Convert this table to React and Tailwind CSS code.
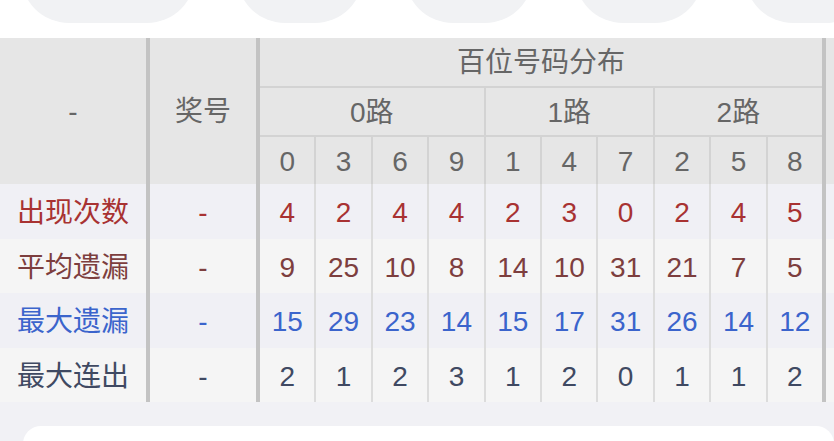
import React from "react";

const FONT = { fontFamily: '"Liberation Sans", "Noto Sans CJK SC", sans-serif' };

const rows = [
  { label: "出现次数", color: "text-[#a83232]", bg: "bg-[#f0f0f5]", vals: [4, 2, 4, 4, 2, 3, 0, 2, 4, 5] },
  { label: "平均遗漏", color: "text-[#7d3e3e]", bg: "bg-[#f5f5f5]", vals: [9, 25, 10, 8, 14, 10, 31, 21, 7, 5] },
  { label: "最大遗漏", color: "text-[#3b64cc]", bg: "bg-[#f0f0f5]", vals: [15, 29, 23, 14, 15, 17, 31, 26, 14, 12] },
  { label: "最大连出", color: "text-[#3f4962]", bg: "bg-[#f5f5f5]", vals: [2, 1, 2, 3, 1, 2, 0, 1, 1, 2] },
];

const digits = [0, 3, 6, 9, 1, 4, 7, 2, 5, 8];

export default function App() {
  return (
    <div className="w-[834px] h-[441px] overflow-hidden bg-[#f1f1f5] text-[28px] leading-none" style={FONT}>
      {/* top tabs */}
      <div className="h-[38px] bg-white overflow-hidden flex pl-[21px] gap-[42px]">
        <div className="w-[174px] h-[96px] -mt-[73px] rounded-[48px] bg-[#f1f2f4] shrink-0" />
        <div className="w-[126px] h-[96px] -mt-[73px] rounded-[48px] bg-[#f1f2f4] shrink-0" />
        <div className="w-[128px] h-[96px] -mt-[73px] rounded-[48px] bg-[#f1f2f4] shrink-0" />
        <div className="w-[128px] h-[96px] -mt-[73px] rounded-[48px] bg-[#f1f2f4] shrink-0" />
        <div className="w-[128px] h-[96px] -mt-[73px] rounded-[48px] bg-[#f1f2f4] shrink-0" />
      </div>

      {/* header */}
      <div className="flex h-[146px] bg-[#e6e6e6] text-[#666666]">
        <div className="w-[146px] shrink-0 flex items-center justify-center pt-[2px]">-</div>
        <div className="w-[4px] shrink-0 bg-[#c3c3c3]" />
        <div className="w-[106px] shrink-0 flex items-center justify-center pt-[2px]">奖号</div>
        <div className="w-[4px] shrink-0 bg-[#c3c3c3]" />
        <div className="w-[562px] shrink-0 flex flex-col">
          <div className="h-[50px] border-b-2 border-[#d3d3d3] flex items-center justify-center pt-[2px]">百位号码分布</div>
          <div className="h-[49px] border-b-2 border-[#d3d3d3] flex">
            <div className="w-[223.6px] flex items-center justify-center pt-[2px]">0路</div>
            <div className="w-[169.2px] border-l-2 border-[#d3d3d3] flex items-center justify-center pt-[2px]">1路</div>
            <div className="flex-1 border-l-2 border-[#d3d3d3] flex items-center justify-center pt-[2px]">2路</div>
          </div>
          <div className="flex-1 flex">
            {digits.map((d, i) => (
              <div
                key={i}
                className={`flex-1 flex items-center justify-center pt-[2px] ${i > 0 ? "border-l-2 border-[#d3d3d3]" : ""}`}
              >
                {d}
              </div>
            ))}
          </div>
        </div>
        <div className="w-[4px] shrink-0 bg-[#c3c3c3]" />
        <div className="flex-1" />
      </div>

      {/* data rows */}
      {rows.map((r, ri) => (
        <div key={ri} className={`flex h-[54.5px] ${r.bg} ${r.color}`}>
          <div className="w-[146px] shrink-0 flex items-center justify-center pt-[4px]">{r.label}</div>
          <div className="w-[4px] shrink-0 bg-[#c3c3c3]" />
          <div className="w-[106px] shrink-0 flex items-center justify-center pt-[4px]">-</div>
          <div className="w-[4px] shrink-0 bg-[#c3c3c3]" />
          <div className="w-[562px] shrink-0 flex">
            {r.vals.map((v, i) => (
              <div
                key={i}
                className={`flex-1 flex items-center justify-center pt-[4px] ${i > 0 ? "border-l-2 border-[#dcdcdc]" : ""}`}
              >
                {v}
              </div>
            ))}
          </div>
          <div className="w-[4px] shrink-0 bg-[#c3c3c3]" />
          <div className="flex-1" />
        </div>
      ))}

      {/* bottom card */}
      <div className="pt-[24px] pl-[23px]">
        <div className="h-[60px] bg-white rounded-tl-[18px] rounded-tr-[18px]" />
      </div>
    </div>
  );
}
